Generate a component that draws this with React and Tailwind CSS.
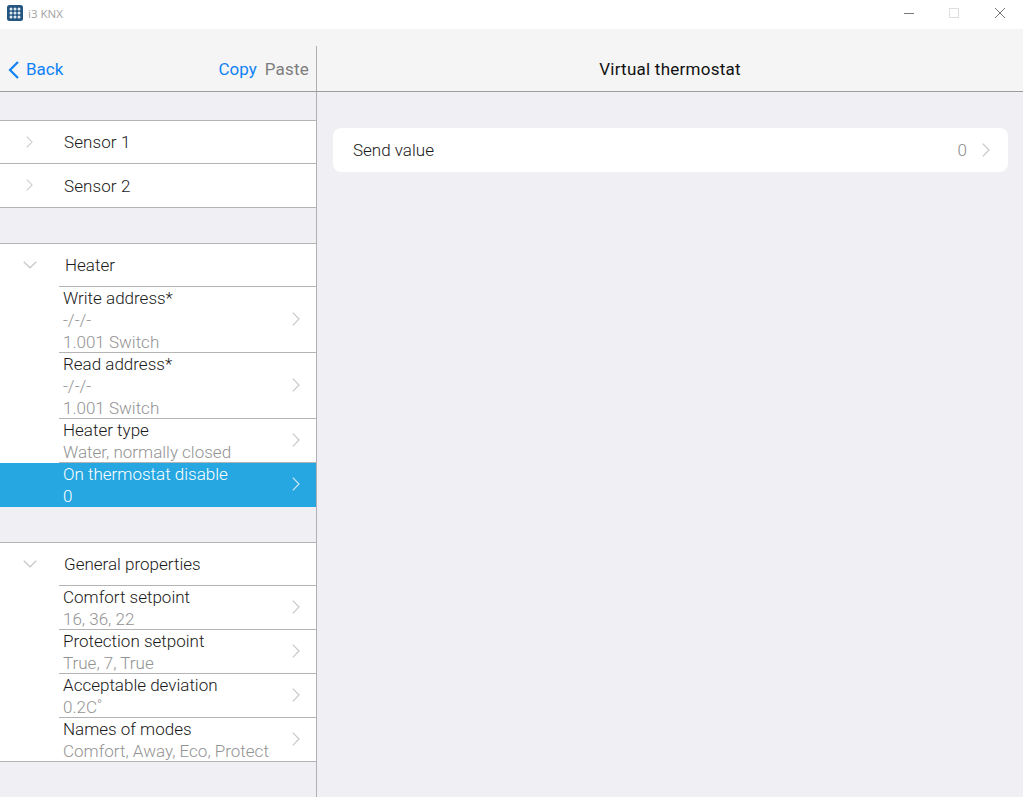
const sections = [
  {
    title: "Heater",
    items: [
      { name: "Write address*", lines: ["-/-/-", "1.001 Switch"] },
      { name: "Read address*", lines: ["-/-/-", "1.001 Switch"] },
      { name: "Heater type", lines: ["Water, normally closed"] },
      { name: "On thermostat disable", lines: ["0"], active: true },
    ],
  },
  {
    title: "General properties",
    items: [
      { name: "Comfort setpoint", lines: ["16, 36, 22"] },
      { name: "Protection setpoint", lines: ["True, 7, True"] },
      { name: "Acceptable deviation", lines: ["0.2C˚"] },
      { name: "Names of modes", lines: ["Comfort, Away, Eco, Protect"] },
    ],
  },
];

function Chevron({ dir = "right", small = false, className = "" }) {
  if (dir === "down") {
    return (
      <svg viewBox="0 0 14 8" className={`h-[8px] w-[14px] shrink-0 ${className}`} fill="none" stroke="currentColor" strokeWidth="1.2">
        <path d="M0.7 0.7 L7 6.8 L13.3 0.7" />
      </svg>
    );
  }
  return (
    <svg viewBox="0 0 8 14" className={`${small ? "h-[12px] w-[7px]" : "h-[14px] w-[8px]"} shrink-0 ${className}`} fill="none" stroke="currentColor" strokeWidth="1.2">
      <path d="M0.8 0.7 L7 7 L0.8 13.3" />
    </svg>
  );
}

function SensorRow({ label, className }) {
  return (
    <div className={`flex items-center border-b border-[#b4b4b4] bg-white ${className}`}>
      <div className="flex w-[64px] justify-center pb-px pr-[5px]">
        <Chevron small className="text-[#c8c8c8]" />
      </div>
      <span className="pt-[2px] tracking-[0.1px] text-[#1a1a1a]">{label}</span>
    </div>
  );
}

function SubRow({ item, last }) {
  if (item.active) {
    return (
      <div className="flex h-[44px] items-center bg-[#26a7e1] pl-[63px] pr-[16px] text-white">
        <div className="flex-1 leading-[22px]">
          <div>{item.name}</div>
          <div>{item.lines[0]}</div>
        </div>
        <Chevron className="-mt-[2px] text-[#cfe6f3]" />
      </div>
    );
  }
  return (
    <div className={`flex pl-[59px] ${last ? "border-b border-[#b4b4b4]" : ""}`}>
      <div className={`flex flex-1 items-center pl-[4px] pr-[16px] ${last ? "" : "border-b border-[#b4b4b4]"}`}>
        <div className="-mb-px flex-1 self-start leading-[22px]">
          <div className="text-[#1a1a1a]">{item.name}</div>
          {item.lines.map((line) => (
            <div key={line} className="text-[#939393]">{line}</div>
          ))}
        </div>
        <Chevron className="-mt-[2px] text-[#c8c8c8]" />
      </div>
    </div>
  );
}

function Section({ section }) {
  return (
    <div className="mt-[35px] border-t border-[#b4b4b4] bg-white">
      <div className="flex h-[42px] items-center">
        <div className="flex w-[59px] justify-center">
          <Chevron dir="down" className="text-[#c8c8c8]" />
        </div>
        <span className={`pt-px text-[#1a1a1a] ${section.title === "Heater" ? "ml-[6px]" : "ml-[5px]"}`}>{section.title}</span>
      </div>
      <div className="ml-[59px] h-px bg-[#b4b4b4]" />
      {section.items.map((item, i) => (
        <SubRow key={item.name} item={item} last={i === section.items.length - 1} />
      ))}
    </div>
  );
}

export default function App() {
  return (
    <div className="flex h-[797px] w-[1023px] flex-col overflow-hidden bg-[#efeff4] font-['Roboto',sans-serif] text-[17px] font-light">
      <div className="flex h-[29px] items-center bg-white pb-[3px] pl-[7px]">
        <svg viewBox="0 0 16 16" className="h-4 w-4">
          <rect width="16" height="16" rx="2.5" fill="#24557f" />
          {[4, 8, 12].map((y) =>
            [4, 8, 12].map((x) => <circle key={`${x}-${y}`} cx={x} cy={y} r="1.5" fill="#dfe8ef" />)
          )}
        </svg>
        <span className="ml-[5px] pt-px font-['Open_Sans',sans-serif] text-[11.5px] font-normal text-[#a3a3a3]">i3 KNX</span>
        <div className="ml-auto flex items-center pr-[18px]">
          <div className="h-px w-[10px] bg-[#777]" />
          <div className="ml-[35px] h-[10px] w-[10px] border border-[#dedede]" />
          <svg viewBox="0 0 10 10" className="ml-[36px] h-[10px] w-[10px]" stroke="#666" strokeWidth="0.9">
            <path d="M0 0 L10 10 M10 0 L0 10" />
          </svg>
        </div>
      </div>

      <div className="flex flex-1">
        <div className="flex h-full w-[317px] shrink-0 flex-col">
          <div className="flex h-[63px] items-end border-b border-[#9c9c9c] bg-[#f5f5f5]">
            <div className="flex h-[45px] w-full items-center border-r border-[#b0b0b0] pl-2 pr-[7px] pt-[3px] font-normal">
              <svg viewBox="0 0 11 18" className="h-[18px] w-[11px]" fill="none" stroke="#0f82f5" strokeWidth="2.2">
                <path d="M10 1 L2 9 L10 17" />
              </svg>
              <span className="ml-[7px] text-[#0f82f5]">Back</span>
              <span className="ml-auto text-[#0f82f5]">Copy</span>
              <span className="ml-2 tracking-[0.2px] text-[#7d7d7d]">Paste</span>
            </div>
          </div>
          <div className="flex-1 border-r border-[#b0b0b0] pt-[28px]">
            <div className="border-t border-[#b4b4b4]">
              <SensorRow label="Sensor 1" className="h-[43px]" />
              <SensorRow label="Sensor 2" className="h-[44px]" />
            </div>
            {sections.map((section) => (
              <Section key={section.title} section={section} />
            ))}
          </div>
        </div>

        <div className="flex flex-1 flex-col">
          <div className="flex h-[63px] items-end border-b border-[#9c9c9c] bg-[#f5f5f5]">
            <div className="flex h-[45px] w-full items-center justify-center pt-[3px] font-normal tracking-[0.25px] text-[#111]">Virtual thermostat</div>
          </div>
          <div className="pl-4 pr-[15px] pt-[36px]">
            <div className="flex h-[44px] items-center rounded-lg bg-white pl-5 pr-[18px]">
              <span className="flex-1 pt-px text-[#1a1a1a]">Send value</span>
              <span className="mr-[15px] pt-px text-[#8a8a8a]">0</span>
              <Chevron className="text-[#c8c8c8]" />
            </div>
          </div>
        </div>
      </div>
    </div>
  );
}
